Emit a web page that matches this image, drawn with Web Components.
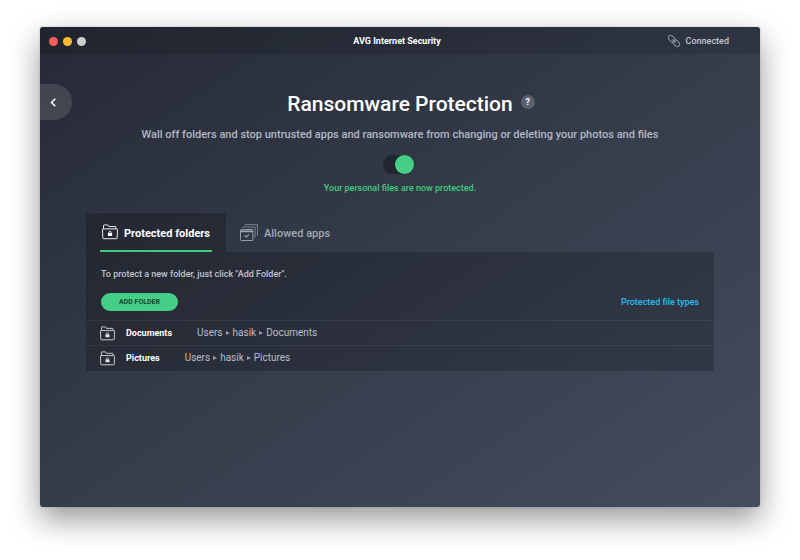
<!DOCTYPE html>
<html lang="en">
<head>
<meta charset="utf-8">
<title>AVG Internet Security</title>
<style>
  body {
    margin: 0;
    box-sizing: border-box;
    min-height: 100vh;
    padding: 27px 40px 53px;
    display: flex;
    background: #fff;
    font-family: Roboto, "Liberation Sans", sans-serif;
    font-weight: 500;
  }
</style>
</head>
<body>
<app-window>
  <title-bar slot="bar" status="Connected">AVG Internet Security</title-bar>
  <back-button></back-button>
  <page-intro>
    <span slot="title">Ransomware Protection</span>
    <span slot="lead">Wall off folders and stop untrusted apps and ransomware from changing or deleting your photos and files</span>
    <span slot="status">Your personal files are now protected.</span>
  </page-intro>
  <folder-panel>
    <tab-item slot="tabs" active icon="folder">Protected folders</tab-item>
    <tab-item slot="tabs" icon="apps">Allowed apps</tab-item>
    <span slot="hint">To protect a new folder, just click "Add Folder".</span>
    <folder-row slot="rows" name="Documents" path="Users/hasik/Documents"></folder-row>
    <folder-row slot="rows" name="Pictures" path="Users/hasik/Pictures"></folder-row>
  </folder-panel>
</app-window>

<script>
const folderIcon = `
<svg viewBox="0 0 16 16" width="16" height="16" fill="none" stroke="currentColor" aria-hidden="true">
  <path d="M1.5 5V1.6Q1.5 .9 2.2 .9H5.8L6.8 2.5H13.2Q13.9 2.5 13.9 3.2V5" stroke-width=".9"/>
  <path d="M1.2 4.9H14.8Q15.5 4.9 15.5 5.7L15.2 13.9Q15.2 14.7 14.4 14.7H1.6Q.8 14.7 .8 13.9L.5 5.7Q.5 4.9 1.2 4.9Z" stroke-width=".9"/>
  <path d="M6.9 9V8.4Q6.9 7.3 8 7.3T9.1 8.4V9" stroke-width=".8"/>
  <rect x="5.9" y="8.9" width="4.2" height="3.1" fill="currentColor" stroke="none"/>
</svg>`;

const appsIcon = `
<svg viewBox="0 0 18 17" width="18" height="17" fill="none" stroke="currentColor" stroke-width=".9" aria-hidden="true">
  <rect x=".5" y="5.5" width="12.4" height="11" rx=".8"/>
  <path d="M.6 7.4H12.8" stroke-width="1.6"/>
  <path d="M4.6 11.2L6.3 12.9L8.9 10.6" stroke-width="1.1"/>
  <path d="M2.9 4V3H15.2V13.2H14.2M5.3 1.6V.6H17.5V10.8H16.5" opacity=".7"/>
</svg>`;

function define(name, template, setup) {
  customElements.define(name, class extends HTMLElement {
    connectedCallback() {
      if (this.shadowRoot) return;
      const root = this.attachShadow({ mode: "open" });
      root.innerHTML = template;
      if (setup) setup(this, root);
    }
  });
}

define("app-window", `
<style>
  :host {
    flex: 1; min-width: 0; display: flex; flex-direction: column;
    border-radius: 3px; overflow: hidden;
    background: linear-gradient(to bottom right, #252a35, #353c4a 50%, #444d5f);
    box-shadow: 0 0 1px rgba(0,0,0,.6), 0 12px 30px rgba(0,0,0,.42);
    color: #fff;
  }
  main { flex: 1; display: grid; grid-template-columns: 46px minmax(0, 1fr) 46px; align-content: start; padding-top: 30px; }
  ::slotted(back-button) { grid-column: 1; grid-row: 1; }
  ::slotted(page-intro) { grid-column: 1 / -1; grid-row: 1; }
  ::slotted(folder-panel) { grid-column: 2; grid-row: 2; }
</style>
<slot name="bar"></slot>
<main><slot></slot></main>`);

define("title-bar", `
<style>
  :host {
    display: grid; grid-template-columns: 1fr auto 1fr; align-items: center; box-sizing: border-box;
    height: 27px; padding: 1px 15px 0 9px; background: rgba(0,0,0,.12);
    font-size: 9px; line-height: 12px;
  }
  .lights { display: flex; gap: 5px; }
  .lights button { width: 9px; height: 9px; padding: 0; border: 0; border-radius: 50%; background: #ff5c59; }
  .lights button:nth-child(2) { background: #fdbc2d; }
  .lights button:nth-child(3) { background: #cdcdce; }
  strong { font-weight: 700; }
  .state { justify-self: end; margin-right: 16px; display: flex; align-items: center; gap: 6px; color: #c3c7d3; }
  svg { color: #8a8f9b; }
</style>
<div class="lights">
  <button aria-label="Close"></button><button aria-label="Minimize"></button><button aria-label="Zoom"></button>
</div>
<strong><slot></slot></strong>
<div class="state">
  <svg viewBox="0 0 12 12" width="12" height="12" fill="none" stroke="currentColor" stroke-width="1.1" aria-hidden="true">
    <g transform="rotate(45 6 6)">
      <rect x="-1" y="3.6" width="7.4" height="4.8" rx="2.4"/>
      <rect x="5.6" y="3.6" width="7.4" height="4.8" rx="2.4"/>
      <path d="M3.6 6H8.4"/>
    </g>
  </svg>
  <span class="text"></span>
</div>`, (host, root) => {
  root.querySelector(".text").textContent = host.getAttribute("status");
});

define("back-button", `
<style>
  :host { display: block; z-index: 1; }
  button {
    display: flex; align-items: center; width: 32px; height: 36px; padding: 0 0 0 10px;
    border: 0; border-radius: 0 18px 18px 0; background: rgba(255,255,255,.12); color: #fff;
  }
</style>
<button aria-label="Back">
  <svg viewBox="0 0 7 9" width="7" height="9" fill="none" stroke="currentColor" stroke-width="1.5" aria-hidden="true"><path d="M5.3 .8L1.5 4.5L5.3 8.2"/></svg>
</button>`);

define("page-intro", `
<style>
  :host { display: flex; flex-direction: column; align-items: center; padding-top: 6px; text-align: center; }
  header { align-self: stretch; display: grid; grid-template-columns: 1fr auto 1fr; column-gap: 8px; align-items: center; }
  h1 { grid-column: 2; margin: 0; font-size: 21px; line-height: 28px; font-weight: 500; }
  .help {
    width: 14px; height: 14px; padding: 0; border: 0; border-radius: 50%; margin-bottom: 4px;
    background: #5a606d; color: #fff; font: 700 9px/14px Roboto, "Liberation Sans", sans-serif;
  }
  p { margin: 0; }
  .lead { margin-top: 9px; font-size: 11px; line-height: 16px; color: #b3b8c6; }
  input {
    appearance: none; display: flex; margin: 12px 3px 8px 0; width: 31px; height: 19px; border-radius: 10px;
    background: #22262f;
  }
  input::before { content: ""; width: 19px; height: 19px; border-radius: 50%; background: #45cf86; }
  input:checked { justify-content: flex-end; }
  .status { font-size: 9px; line-height: 12px; color: #3fce81; }
</style>
<header>
  <h1><slot name="title"></slot></h1>
  <button class="help" aria-label="Help">?</button>
</header>
<p class="lead"><slot name="lead"></slot></p>
<input type="checkbox" role="switch" checked aria-label="Ransomware Protection">
<p class="status"><slot name="status"></slot></p>`);

define("folder-panel", `
<style>
  :host { display: block; padding-top: 19px; }
  nav { display: flex; }
  section { background: rgba(0,0,0,.2); padding-bottom: 1px; }
  .top { display: grid; grid-template-columns: 1fr auto; align-items: center; row-gap: 12px; padding: 15px 15px 9px; }
  p { grid-column: 1 / -1; margin: 0; font-size: 9px; line-height: 14px; color: #c0c4cf; }
  .add {
    justify-self: start; height: 18px; padding: 0 18px; border: 0; border-radius: 9px;
    background: #45cf86; color: #17472f; font: 700 7px/18px Roboto, "Liberation Sans", sans-serif;
  }
  a { color: #2cbcf3; font-size: 9px; line-height: 14px; text-decoration: none; }
</style>
<nav role="tablist"><slot name="tabs"></slot></nav>
<section>
  <div class="top">
    <p><slot name="hint"></slot></p>
    <button class="add">ADD FOLDER</button>
    <a href="#types">Protected file types</a>
  </div>
  <slot name="rows"></slot>
</section>`);

define("tab-item", `
<style>
  :host { display: flex; padding: 0 14px; color: #a3a8b4; }
  :host([active]) { background: rgba(0,0,0,.2); color: #fff; }
  button {
    display: flex; align-items: center; gap: 6px; box-sizing: border-box; height: 39px; padding: 4px 0 0;
    border: 0; border-bottom: 2px solid transparent; background: none; color: inherit;
    font: 500 11px/16px Roboto, "Liberation Sans", sans-serif;
  }
  :host([active]) button { font-weight: 700; border-bottom-color: #3fce81; padding-left: 2px; padding-right: 2px; }
  .icon { display: flex; padding-bottom: 3px; }
</style>
<button role="tab"><span class="icon"></span><slot></slot></button>`, (host, root) => {
  root.querySelector(".icon").innerHTML = host.getAttribute("icon") === "folder" ? folderIcon : appsIcon;
  root.querySelector("button").setAttribute("aria-selected", host.hasAttribute("active"));
});

define("folder-row", `
<style>
  :host {
    display: flex; align-items: center; box-sizing: border-box; height: 25px; padding: 0 14px;
    border-top: 1px solid rgba(255,255,255,.06); font-size: 9px; line-height: 12px;
  }
  svg { display: block; width: 15px; height: 15px; margin-right: 11px; color: #e4e6eb; }
  strong { font-weight: 700; margin-right: 25px; }
  .path { display: flex; align-items: center; gap: 3px; font-size: 10px; font-weight: 400; color: #b9becb; }
  i { border-left: 4px solid #969ba7; border-top: 2px solid transparent; border-bottom: 2px solid transparent; }
</style>
${folderIcon}<strong></strong><span class="path"></span>`, (host, root) => {
  root.querySelector("strong").textContent = host.getAttribute("name");
  root.querySelector(".path").innerHTML = host.getAttribute("path").split("/")
    .map(part => `<span>${part}</span>`).join("<i></i>");
});
</script>
</body>
</html>
